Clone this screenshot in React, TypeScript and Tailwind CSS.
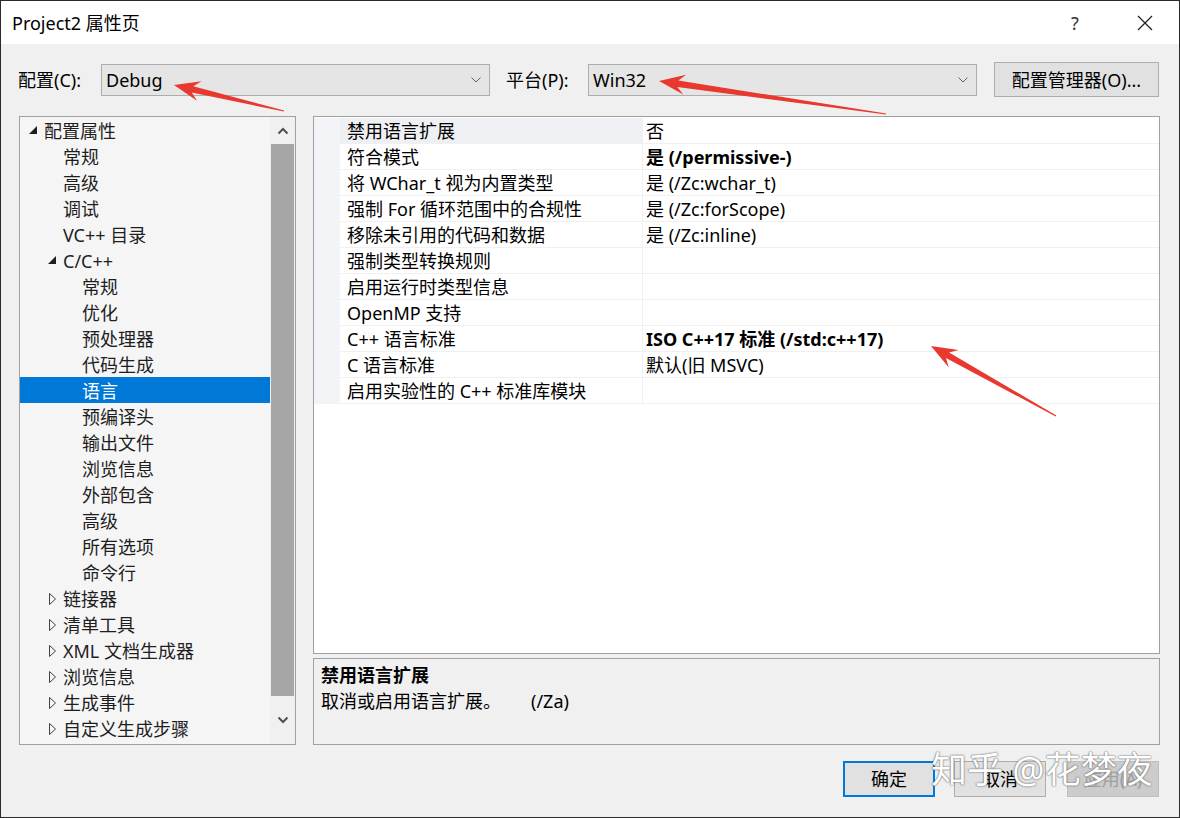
import React from 'react';

type TreeItem = { label: string; level: 0 | 1 | 2; state?: 'open' | 'closed'; selected?: boolean };

const tree: TreeItem[] = [
  { label: '配置属性', level: 0, state: 'open' },
  { label: '常规', level: 1 },
  { label: '高级', level: 1 },
  { label: '调试', level: 1 },
  { label: 'VC++ 目录', level: 1 },
  { label: 'C/C++', level: 1, state: 'open' },
  { label: '常规', level: 2 },
  { label: '优化', level: 2 },
  { label: '预处理器', level: 2 },
  { label: '代码生成', level: 2 },
  { label: '语言', level: 2, selected: true },
  { label: '预编译头', level: 2 },
  { label: '输出文件', level: 2 },
  { label: '浏览信息', level: 2 },
  { label: '外部包含', level: 2 },
  { label: '高级', level: 2 },
  { label: '所有选项', level: 2 },
  { label: '命令行', level: 2 },
  { label: '链接器', level: 1, state: 'closed' },
  { label: '清单工具', level: 1, state: 'closed' },
  { label: 'XML 文档生成器', level: 1, state: 'closed' },
  { label: '浏览信息', level: 1, state: 'closed' },
  { label: '生成事件', level: 1, state: 'closed' },
  { label: '自定义生成步骤', level: 1, state: 'closed' },
];

const props: { name: string; value: string; bold?: boolean; selected?: boolean }[] = [
  { name: '禁用语言扩展', value: '否', selected: true },
  { name: '符合模式', value: '是 (/permissive-)', bold: true },
  { name: '将 WChar_t 视为内置类型', value: '是 (/Zc:wchar_t)' },
  { name: '强制 For 循环范围中的合规性', value: '是 (/Zc:forScope)' },
  { name: '移除未引用的代码和数据', value: '是 (/Zc:inline)' },
  { name: '强制类型转换规则', value: '' },
  { name: '启用运行时类型信息', value: '' },
  { name: 'OpenMP 支持', value: '' },
  { name: 'C++ 语言标准', value: 'ISO C++17 标准 (/std:c++17)', bold: true },
  { name: 'C 语言标准', value: '默认(旧 MSVC)' },
  { name: '启用实验性的 C++ 标准库模块', value: '' },
];

function Chevron() {
  return (
    <svg width="12" height="8" viewBox="0 0 12 8" className="shrink-0">
      <polyline points="1.5,1.5 6,6 10.5,1.5" fill="none" stroke="#606060" strokeWidth="1" />
    </svg>
  );
}

function Combo({ value }: { value: string }) {
  return (
    <div className="w-[389px] h-[32px] bg-[#e5e5e5] border border-[#adadad] flex items-center pl-[4px] pr-[7px]">
      <span className="flex-1 text-[18px] leading-[26px] text-black pt-[1px]">{value}</span>
      <Chevron />
    </div>
  );
}

function Triangle({ state, selected }: { state?: 'open' | 'closed'; selected?: boolean }) {
  if (state === 'open') {
    return (
      <svg width="16" height="26" viewBox="0 0 16 26" className="shrink-0">
        <polygon points="9,9 9,17 1,17" fill={selected ? '#fff' : '#1e1e1e'} />
      </svg>
    );
  }
  if (state === 'closed') {
    return (
      <svg width="16" height="26" viewBox="0 0 16 26" className="shrink-0">
        <polygon points="2.5,8.5 8.5,14 2.5,19.5" fill="none" stroke="#404040" strokeWidth="1" />
      </svg>
    );
  }
  return null;
}

function TreeRow({ item }: { item: TreeItem }) {
  let pad = '';
  if (item.level === 0) pad = 'pl-[8px]';
  else if (item.level === 1) pad = item.state ? 'pl-[27px]' : 'pl-[43px]';
  else pad = 'pl-[62px]';
  return (
    <div
      className={`h-[26px] flex items-center ${pad} ${
        item.selected ? 'bg-[#0078d7] text-white' : 'text-[#1e1e1e]'
      }`}
    >
      <Triangle state={item.state} selected={item.selected} />
      <span className="text-[18px] leading-[26px] whitespace-nowrap pt-[2px]">{item.label}</span>
    </div>
  );
}

function arrowPoints(tx: number, ty: number, sx: number, sy: number) {
  const dx = sx - tx;
  const dy = sy - ty;
  const len = Math.hypot(dx, dy);
  const ux = dx / len;
  const uy = dy / len;
  const nx = -uy;
  const ny = ux;
  const L = 26;
  const W = 10;
  const w1 = 3.2;
  const back = 19;
  const p = (a: number, b: number) => `${(tx + ux * a + nx * b).toFixed(1)},${(ty + uy * a + ny * b).toFixed(1)}`;
  return [p(0, 0), p(L, W), p(back, w1), p(len, 0.6), p(len, -0.6), p(back, -w1), p(L, -W)].join(' ');
}

function Arrows() {
  return (
    <svg className="absolute inset-0 pointer-events-none" width="1180" height="818" viewBox="0 0 1180 818">
      <polygon points={arrowPoints(173, 84, 283, 110)} fill="#e8382f" />
      <polygon points={arrowPoints(658, 80, 885, 113)} fill="#e8382f" />
      <polygon points={arrowPoints(930, 345, 1055, 415)} fill="#e8382f" />
    </svg>
  );
}

export default function App() {
  return (
    <div className="w-[1180px] h-[818px] relative overflow-hidden bg-[#f0f0f0] border border-[#2a2a2a] flex flex-col font-['Noto_Sans','Noto_Sans_CJK_SC',sans-serif] text-black">
      {/* Title bar */}
      <div className="h-[43px] bg-white flex items-center pl-[11px] shrink-0">
        <span className="flex-1 text-[18px] leading-[26px] text-black">Project2 属性页</span>
        <span className="w-[20px] text-center text-[18px] leading-[26px] text-[#333] mr-[52px]">?</span>
        <svg width="16" height="16" viewBox="0 0 16 16" className="mr-[26px]">
          <line x1="1" y1="1" x2="15" y2="15" stroke="#222" strokeWidth="1.2" />
          <line x1="15" y1="1" x2="1" y2="15" stroke="#222" strokeWidth="1.2" />
        </svg>
      </div>

      {/* Config row */}
      <div className="flex items-center pl-[17px] mt-[18px] h-[35px] shrink-0">
        <span className="w-[83px] text-[18px] leading-[26px] pt-[1px]">配置(C):</span>
        <Combo value="Debug" />
        <span className="ml-[16px] w-[82px] text-[18px] leading-[26px] pt-[1px]">平台(P):</span>
        <Combo value="Win32" />
        <div className="ml-[17px] w-[165px] h-[35px] bg-[#e1e1e1] border border-[#adadad] flex items-center justify-center text-[18px] leading-[26px]">
          配置管理器(O)...
        </div>
      </div>

      {/* Main */}
      <div className="flex pl-[18px] pr-[19px] mt-[19px] gap-[17px] h-[629px] shrink-0">
        {/* Tree */}
        <div className="w-[277px] h-full border border-[#a0a0a0] bg-[#f5f5f5] flex">
          <div className="flex-1 overflow-hidden">
            {tree.map((t, i) => (
              <TreeRow key={i} item={t} />
            ))}
          </div>
          <div className="w-[25px] h-full bg-[#f0f0f0] flex flex-col">
            <div className="h-[27px] flex items-center justify-center">
              <svg width="12" height="8" viewBox="0 0 12 8">
                <polyline points="1.5,6.5 6,2 10.5,6.5" fill="none" stroke="#505050" strokeWidth="2" />
              </svg>
            </div>
            <div className="mx-[1px] h-[552px] bg-[#a6a6a6]" />
            <div className="flex-1 flex items-center justify-center">
              <svg width="12" height="8" viewBox="0 0 12 8">
                <polyline points="1.5,1.5 6,6 10.5,1.5" fill="none" stroke="#505050" strokeWidth="2" />
              </svg>
            </div>
          </div>
        </div>

        {/* Right column */}
        <div className="flex-1 flex flex-col gap-[4px]">
          <div className="h-[538px] border border-[#a0a0a0] bg-white flex flex-col pt-[1px]">
            {props.map((p, i) => (
              <div key={i} className="h-[26px] flex">
                <div className="w-[26px] bg-[#f3f4f7]" />
                <div
                  className={`w-[303px] border-b border-r border-[#f0f0f0] pl-[7px] pt-[1px] text-[18px] leading-[25px] whitespace-nowrap ${
                    p.selected ? 'bg-[#eef0f4]' : ''
                  }`}
                >
                  {p.name}
                </div>
                <div
                  className={`flex-1 border-b border-[#f0f0f0] pl-[3px] pt-[1px] text-[18px] leading-[25px] whitespace-nowrap ${
                    p.bold ? 'font-bold' : ''
                  }`}
                >
                  {p.value}
                </div>
              </div>
            ))}
          </div>
          <div className="h-[87px] border border-[#a0a0a0] bg-[#f0f0f0] pl-[7px] pt-[3px]">
            <div className="text-[18px] leading-[26px] font-bold">禁用语言扩展</div>
            <div className="text-[18px] leading-[26px] whitespace-nowrap">
              取消或启用语言扩展。<span className="ml-[30px]">(/Za)</span>
            </div>
          </div>
        </div>
      </div>

      {/* Buttons */}
      <div className="flex justify-end pr-[20px] mt-[16px] gap-[19px]">
        <div className="w-[92px] h-[36px] border-2 border-[#0078d7] bg-[#e1e1e1] flex items-center justify-center text-[18px] leading-[26px]">
          确定
        </div>
        <div className="w-[92px] h-[36px] border border-[#adadad] bg-[#e1e1e1] flex items-center justify-center text-[18px] leading-[26px]">
          取消
        </div>
        <div className="ml-[2px] w-[92px] h-[36px] border border-[#bfbfbf] bg-[#cccccc] flex items-center justify-center text-[18px] leading-[26px] text-[#a0a0a0]">
          应用(A)
        </div>
      </div>

      <Arrows />

      {/* Watermark */}
      <div className="absolute left-[930px] top-[746px] text-[36px] leading-[46px] text-white pointer-events-none [text-shadow:0_0_2px_#666,0_0_1px_#666]">
        知乎 @花梦夜
      </div>
    </div>
  );
}
